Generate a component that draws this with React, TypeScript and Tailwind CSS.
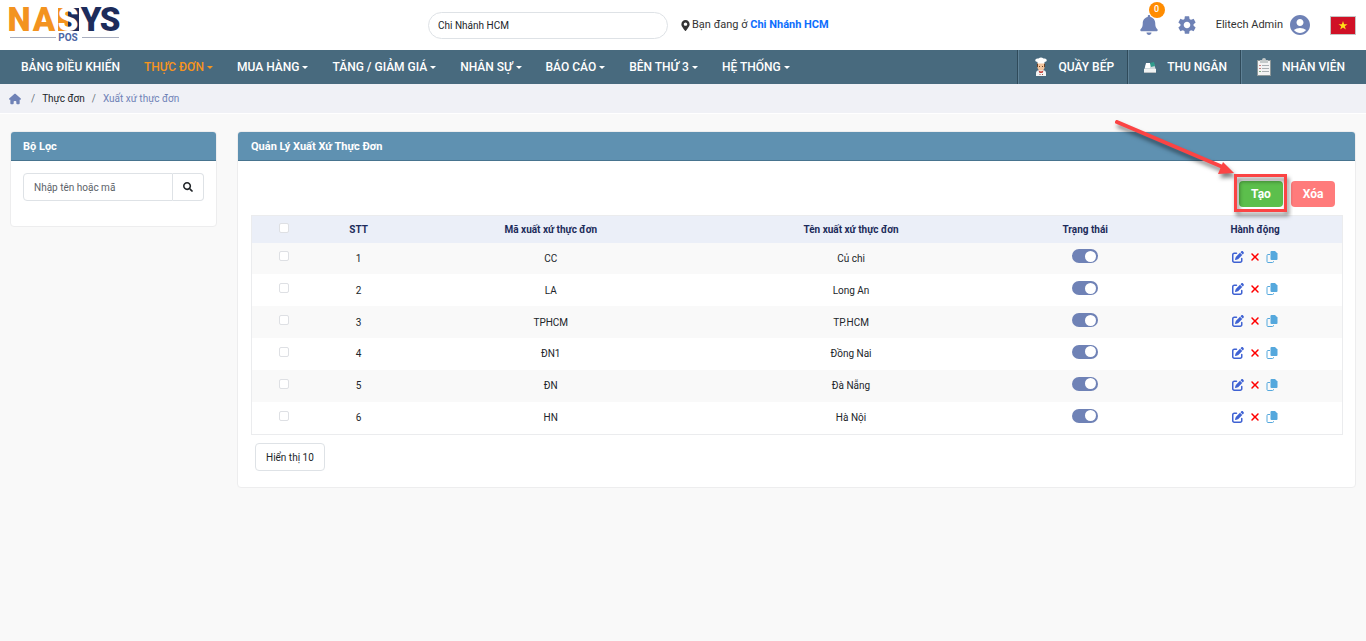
import React from "react";
import { FaSearch, FaMapMarkerAlt, FaBell } from "react-icons/fa";
import { FaPenToSquare, FaXmark, FaHouse } from "react-icons/fa6";
import { MdSettings, MdAccountCircle } from "react-icons/md";

const menu = [
  { label: "BẢNG ĐIỀU KHIỂN" },
  { label: "THỰC ĐƠN", caret: true, active: true },
  { label: "MUA HÀNG", caret: true },
  { label: "TĂNG / GIẢM GIÁ", caret: true },
  { label: "NHÂN SỰ", caret: true },
  { label: "BÁO CÁO", caret: true },
  { label: "BÊN THỨ 3", caret: true },
  { label: "HỆ THỐNG", caret: true },
];

const rows = [
  { code: "CC", name: "Củ chi" },
  { code: "LA", name: "Long An" },
  { code: "TPHCM", name: "TP.HCM" },
  { code: "ĐN1", name: "Đồng Nai" },
  { code: "ĐN", name: "Đà Nẵng" },
  { code: "HN", name: "Hà Nội" },
];

function Logo() {
  return (
    <svg viewBox="0 0 118 50" className="h-[50px] w-[118px]" role="img" aria-label="NASYS POS">
      <path d="M53 8h10v23H53z" fill="#f3931f" />
      <path d="M63 8h11v23H63z" fill="#1d2c5b" />
      <g fontFamily="Roboto, sans-serif" fontWeight="900" fontSize="33" textAnchor="middle">
        <text x="14" y="31" fill="#f3931f">N</text>
        <text x="39" y="31" fill="#f3931f">A</text>
        <text x="63" y="31" fill="#fff">S</text>
        <text x="86" y="31" fill="#1d2c5b">Y</text>
        <text x="105" y="31" fill="#1d2c5b">S</text>
      </g>
      <path d="M5 37.500h46M77 37.500h37" stroke="#a9aebf" />
      <text x="63" y="41" textAnchor="middle" fontFamily="Roboto, sans-serif" fontWeight="700" fontSize="10" fill="#4c66a5">POS</text>
    </svg>
  );
}

function ChefIcon() {
  return (
    <svg viewBox="0 0 16 20" className="h-5 w-4" aria-hidden="true">
      <path d="M3 19v-3q0-2.500 3-3h4q3 .5 3 3v3z" fill="#f4f4f4" />
      <path d="M4.500 6h7v4q0 3.500-3.500 3.500T4.500 10z" fill="#f3c49c" />
      <path d="M4 6.500h1V10H4zM11 6.500h1V10h-1zM6 9h1v1H6zM9 9h1v1H9z" fill="#6b4226" />
      <path d="M4.500 6.500V5Q1.500 4.500 2.500 2.500 3.500 1 5.500 1.500q2.500-2 5 0 2-.5 3 1 1 2-2 2.500v1.500z" fill="#fff" />
      <path d="M5.500 13.500l2.500 1 2.500-1-1 2.500h-3z" fill="#c9433c" />
      <path d="M6.500 17h1v1h-1zM9 17h1v1H9z" fill="#a05a48" />
    </svg>
  );
}

function RegisterIcon() {
  return (
    <svg viewBox="0 0 14 14" className="h-3.5 w-3.5" aria-hidden="true">
      <path d="M3 4h8l2 6H1z" fill="#cfdadd" />
      <path d="M7 3l4-1 1 4-4 1z" fill="#2f9c8c" />
      <path d="M3 3h4v5H2z" fill="#fff" />
      <path d="M1 9h12v4H1z" fill="#f1f3f3" />
      <path d="M1 12h12v1H1z" fill="#b9bfc2" />
    </svg>
  );
}

function ClipboardIcon() {
  return (
    <svg viewBox="0 0 16 20" className="h-5 w-4" aria-hidden="true">
      <path d="M1 3h14v16H1z" fill="#8e9899" />
      <path d="M2 4h12v14H2z" fill="#f3f3f3" />
      <path d="M4 3h2q0-2 2-2t2 2h2v3H4z" fill="#c5caca" />
      <path d="M3 8.500h2M3 11.500h2" stroke="#c98080" />
      <path d="M3 14.500h2" stroke="#7fae7f" />
      <path d="M6 8.500h7M6 11.500h7M6 14.500h7" stroke="#aab0b3" />
    </svg>
  );
}

function CopyIcon() {
  return (
    <svg viewBox="0 0 12 12" className="size-3" fill="currentColor" aria-hidden="true">
      <path d="M5.500 0H9l2.500 2.500V8q0 1-1 1h-5q-1 0-1-1V1q0-1 1-1z" />
      <path d="M4 3.500H2q-1 0-1 1V10.500q0 1 1 1h4.500q1 0 1-1V10" fill="none" stroke="currentColor" />
    </svg>
  );
}

const shortcuts = [
  { label: "QUẦY BẾP", icon: <ChefIcon /> },
  { label: "THU NGÂN", icon: <RegisterIcon /> },
  { label: "NHÂN VIÊN", icon: <ClipboardIcon /> },
];

function CheckBox({ label }: { label: string }) {
  return (
    <input
      type="checkbox"
      aria-label={label}
      className="mx-auto block size-2.5 appearance-none rounded-[2px] border border-[#dee0e4] bg-white checked:bg-[#6f82b6]"
    />
  );
}

export default function App() {
  return (
    <div className="min-h-screen bg-[#f9f9f9] font-['Roboto',sans-serif] text-[10px] text-[#212529]">
      <header className="flex h-[50px] items-center justify-between bg-white pr-2.5 pl-[5px]">
        <a href="#" className="w-[423px]"><Logo /></a>
        <div className="flex flex-1 items-center gap-3">
          <input
            aria-label="Chi nhánh"
            defaultValue="Chi Nhánh HCM"
            className="h-[27px] w-60 rounded-full border border-[#dee2e6] bg-white px-[9px] outline-none"
          />
          <p className="flex items-center gap-px text-[11px] text-[#333]">
            <FaMapMarkerAlt className="size-[11px]" />
            <span>Bạn đang ở <b className="font-bold text-[#0d6efd]">Chi Nhánh HCM</b></span>
          </p>
        </div>
        <div className="flex items-center">
          <button aria-label="Thông báo" className="relative mr-[17px] text-[#6f82b6]">
            <FaBell className="size-5" />
            <span className="absolute -top-[13px] left-2.5 flex size-4 items-center justify-center rounded-full bg-[#ff8c00] text-[9px] font-medium text-white">0</span>
          </button>
          <button aria-label="Cài đặt" className="mr-[18px] text-[#6f82b6]"><MdSettings className="size-[22px]" /></button>
          <button className="mr-[18px] flex items-center gap-[5px] text-[11px] text-[#333]">
            Elitech Admin
            <MdAccountCircle className="size-6 text-[#6f82b6]" />
          </button>
          <button aria-label="Tiếng Việt">
            <svg viewBox="0 0 26 19" className="h-[19px] w-[26px]">
              <path d="M0 0h26v19H0z" fill="#c5c5c5" />
              <path d="M1 1h24v17H1z" fill="#d01126" />
              <path d="M13 5l1.100 3.200h3.400l-2.700 2 1 3.300-2.800-2-2.800 2 1-3.300-2.700-2h3.400z" fill="#ffe018" />
            </svg>
          </button>
        </div>
      </header>

      <nav className="flex h-[34px] items-stretch justify-between bg-[#486a7e] text-[12px] font-medium text-white">
        <ul className="flex items-center gap-6 pl-[21px]">
          {menu.map((m) => (
            <li key={m.label}>
              <a href="#" className={m.active ? "flex items-center gap-[3px] text-[#f7941d]" : "flex items-center gap-[3px]"}>
                {m.label}
                {m.caret && <span className="border-x-3 border-t-3 border-x-transparent border-t-current" />}
              </a>
            </li>
          ))}
        </ul>
        <ul className="flex pr-2">
          {shortcuts.map((s) => (
            <li key={s.label} className="flex border-l border-[#2f4a5a]">
              <a href="#" className="flex items-center gap-2.5 border-l border-[#5f8196] pr-[13px] pl-3.5">
                {s.icon}
                {s.label}
              </a>
            </li>
          ))}
        </ul>
      </nav>

      <nav aria-label="Breadcrumb" className="flex h-[30px] items-center gap-[7px] border-b border-white bg-[#f0f1f6] pl-[9px] text-[#6f82b6]">
        <a href="#" aria-label="Trang chủ"><FaHouse className="size-3" /></a>
        <span className="ml-[3px] text-[#6c757d]">/</span>
        <a href="#" className="text-[#212529]">Thực đơn</a>
        <span className="text-[#6c757d]">/</span>
        <span>Xuất xứ thực đơn</span>
      </nav>

      <main className="flex items-start gap-5 px-2.5 pt-[17px]">
        <section className="w-[207px] shrink-0 rounded border border-[#ededee] bg-white">
          <h2 className="flex h-[29px] items-center rounded-t-[3px] border-b border-[#48748f] bg-[#5f91b1] px-3 pt-0.5 text-[11px] font-bold text-white">Bộ Lọc</h2>
          <form className="flex px-3 pt-3 pb-[25px]">
            <input
              aria-label="Tìm kiếm"
              placeholder="Nhập tên hoặc mã"
              className="h-7 min-w-0 flex-1 rounded-l border border-[#dee2e6] px-2.5 outline-none placeholder:text-[#5c6268]"
            />
            <button type="button" aria-label="Tìm" className="flex w-[31px] items-center justify-center rounded-r border border-l-0 border-[#dee2e6]">
              <FaSearch className="size-2.5" />
            </button>
          </form>
        </section>

        <section className="min-w-0 flex-1 rounded border border-[#ededee] bg-white">
          <h2 className="flex h-[29px] items-center rounded-t-[3px] border-b border-[#48748f] bg-[#5f91b1] px-[13px] pt-0.5 text-[11px] font-bold text-white">Quản Lý Xuất Xứ Thực Đơn</h2>
          <div className="pt-5 pr-3 pb-4 pl-[13px]">
            <div className="flex justify-end gap-2 pr-2 pb-2">
              <div className="relative">
                <button className="h-[26px] w-11 rounded bg-[#5cbf4c] text-[12px] font-bold text-white">Tạo</button>
                <svg viewBox="0 0 180 105" className="pointer-events-none absolute -top-[63px] -left-[126px] h-[105px] w-[180px] max-w-none" aria-hidden="true">
                  <g filter="drop-shadow(2px 4px 2px rgb(0 0 0 / 0.5))">
                    <path d="M4 4L112 50" stroke="#fb4444" strokeWidth="4" strokeLinecap="round" />
                    <path d="M110 44L121 55L105 56z" fill="#fb4444" />
                    <path d="M122.500 57.500h50v35h-50z" fill="none" stroke="#fb4444" strokeWidth="3" />
                  </g>
                </svg>
              </div>
              <button className="h-[26px] w-11 rounded bg-[#ff7b7b] text-[12px] font-bold text-white">Xóa</button>
            </div>
            <table className="h-[220px] w-full table-fixed border-collapse border border-[#ebecee] text-center">
              <colgroup>
                <col className="w-16" />
                <col className="w-[86px]" />
                <col className="w-[298px]" />
                <col className="w-[302px]" />
                <col className="w-[166px]" />
                <col className="w-[174px]" />
              </colgroup>
              <thead>
                <tr className="h-[27px] bg-[#ebeff8] text-[#1d2c5b]">
                  <th className="pb-0.5"><CheckBox label="Chọn tất cả" /></th>
                  <th>STT</th>
                  <th>Mã xuất xứ thực đơn</th>
                  <th>Tên xuất xứ thực đơn</th>
                  <th>Trạng thái</th>
                  <th>Hành động</th>
                </tr>
              </thead>
              <tbody>
                {rows.map((r, i) => (
                  <tr key={r.code} className="odd:bg-[#f9f9f9]">
                    <td className="pb-1"><CheckBox label={r.name} /></td>
                    <td>{i + 1}</td>
                    <td>{r.code}</td>
                    <td>{r.name}</td>
                    <td className="pb-1">
                      <input
                        type="checkbox"
                        role="switch"
                        aria-label={"Trạng thái " + r.name}
                        defaultChecked
                        className="mx-auto flex h-3.5 w-[26px] appearance-none items-center rounded-full bg-[#c3c8d4] px-0.5 before:size-[11px] before:rounded-full before:bg-white checked:justify-end checked:bg-[#6f82b6]"
                      />
                    </td>
                    <td className="pb-0.5">
                      <div className="flex items-center justify-center gap-[5px]">
                        <button aria-label="Sửa" className="text-[#3f62d3]"><FaPenToSquare className="size-3" /></button>
                        <button aria-label="Xóa" className="text-[#f00]"><FaXmark className="size-3" /></button>
                        <button aria-label="Sao chép" className="text-[#55a8dd]"><CopyIcon /></button>
                      </div>
                    </td>
                  </tr>
                ))}
              </tbody>
            </table>
            <button className="mt-2 ml-1 h-7 rounded border border-[#dee2e6] px-2.5">Hiển thị 10</button>
          </div>
        </section>
      </main>
    </div>
  );
}
